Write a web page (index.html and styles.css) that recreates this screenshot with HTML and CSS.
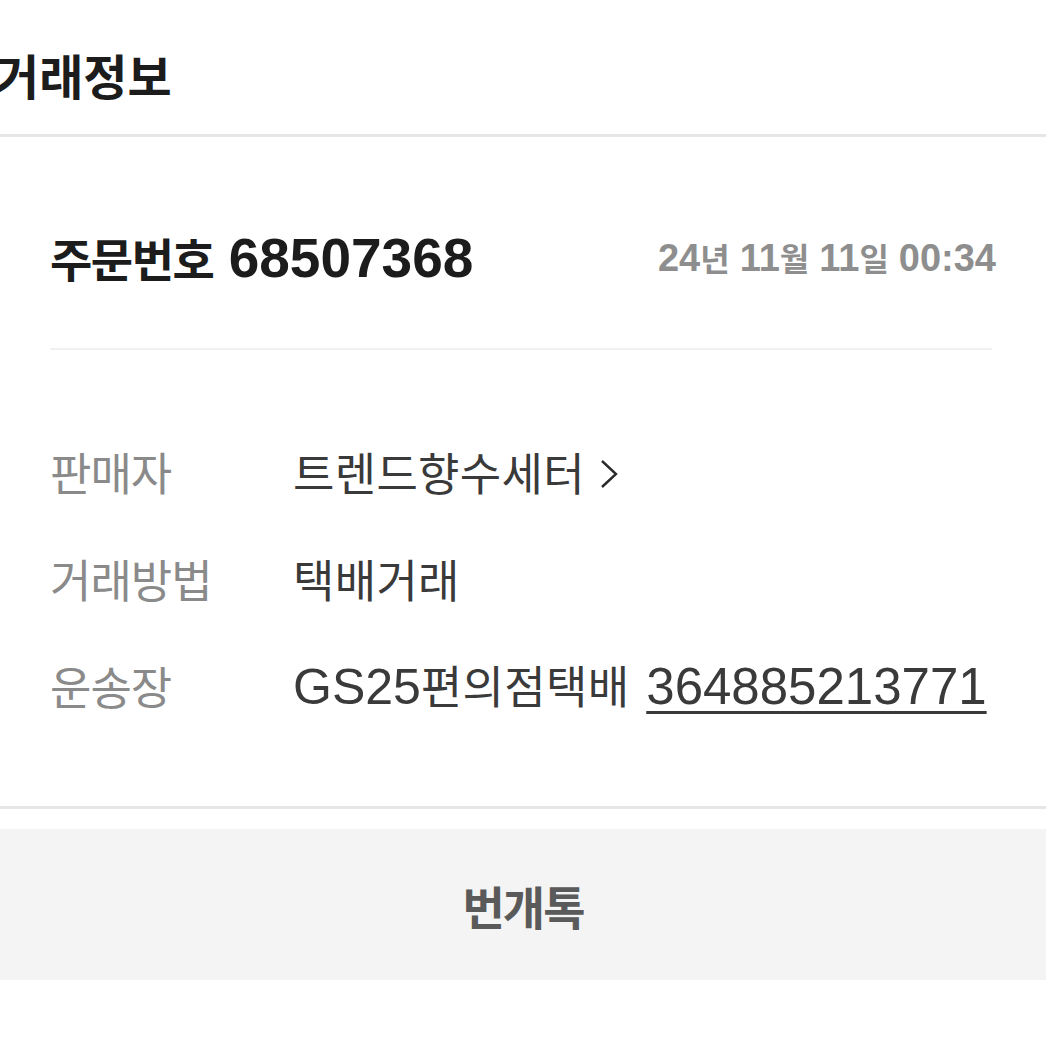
FILE: index.html
```html
<!DOCTYPE html>
<html lang="ko">
<head>
    <meta charset="UTF-8">
    <meta name="viewport" content="width=device-width, initial-scale=1.0">
    <title>거래정보</title>
    <link rel="stylesheet" href="styles.css">
</head>
<body>
    <h1 class="title">거래정보</h1>

    <div class="card">
        <div class="order-head">
            <div class="order-no">주문번호 <span class="num">68507368</span></div>
            <div class="order-date"><span class="num">24</span>년 <span class="num">11</span>월 <span class="num">11</span>일 <span class="num">00:34</span></div>
        </div>

        <div class="info">
            <div class="info-row">
                <div class="label">판매자</div>
                <div class="value">트렌드향수세터<svg class="chevron" width="20" height="28" viewBox="0 0 20 28"><polyline points="3,1 17,14 3,27" fill="none" stroke="#2a2a2a" stroke-width="2.4"/></svg></div>
            </div>
            <div class="info-row">
                <div class="label">거래방법</div>
                <div class="value">택배거래</div>
            </div>
            <div class="info-row">
                <div class="label">운송장</div>
                <div class="value"><span class="num">GS25</span>편의점택배 <a class="tracking num" href="#">364885213771</a></div>
            </div>
        </div>
    </div>

    <button class="talk-button">번개톡</button>
</body>
</html>
```

FILE: styles.css
```css
body {
    margin: 0;
    background-color: #fff;
    font-family: "Noto Sans CJK KR", "Liberation Sans", sans-serif;
    color: #1c1c1c;
}
.num {
    font-family: "Liberation Sans", "Noto Sans CJK KR", sans-serif;
    letter-spacing: 0;
}
.title {
    margin: 0 0 0 -5px;
    padding-top: 44px;
    height: 90px;
    font-size: 48px;
    line-height: 60px;
    font-weight: 700;
    letter-spacing: 0;
}
.card {
    border-top: 3px solid #e6e6e6;
    border-bottom: 3px solid #e6e6e6;
    padding: 0 52px 0 50px;
}
.order-head {
    display: flex;
    justify-content: space-between;
    align-items: center;
    padding: 90px 0 60px;
    line-height: 60px;
    border-bottom: 2px solid #f0f0f0;
    margin-right: 2px;
}
.order-no {
    font-size: 46px;
    font-weight: 700;
    letter-spacing: -1.5px;
    color: #1c1c1c;
}
.order-no .num {
    font-size: 55px;
    margin-left: 4px;
}
.order-date {
    font-size: 32px;
    font-weight: 700;
    letter-spacing: 0.5px;
    color: #8e8e8e;
    margin-right: -4px;
}
.order-date .num {
    font-size: 38px;
}
.info {
    padding: 68px 0 67px;
}
.info-row {
    display: flex;
    height: 107px;
    align-items: center;
    line-height: 60px;
}
.label {
    width: 243px;
    font-size: 45px;
    letter-spacing: -1px;
    color: #8a8a8a;
}
.value {
    font-size: 45px;
    letter-spacing: 0.3px;
    color: #3a3a3a;
}
.value .num {
    font-size: 50px;
}
.chevron {
    vertical-align: middle;
    margin-left: 14px;
    position: relative;
    top: -4px;
}
.tracking {
    color: #3a3a3a;
    text-decoration: underline;
    text-decoration-thickness: 3px;
    text-underline-offset: 7px;
    margin-left: 4px;
}
.value .tracking {
    font-size: 51px;
}
.talk-button {
    display: block;
    width: 100%;
    height: 151px;
    margin-top: 20px;
    border: none;
    background-color: #f4f4f4;
    font-family: "Noto Sans CJK KR", sans-serif;
    font-size: 46px;
    font-weight: 700;
    letter-spacing: -2px;
    color: #5a5a5a;
}
```
